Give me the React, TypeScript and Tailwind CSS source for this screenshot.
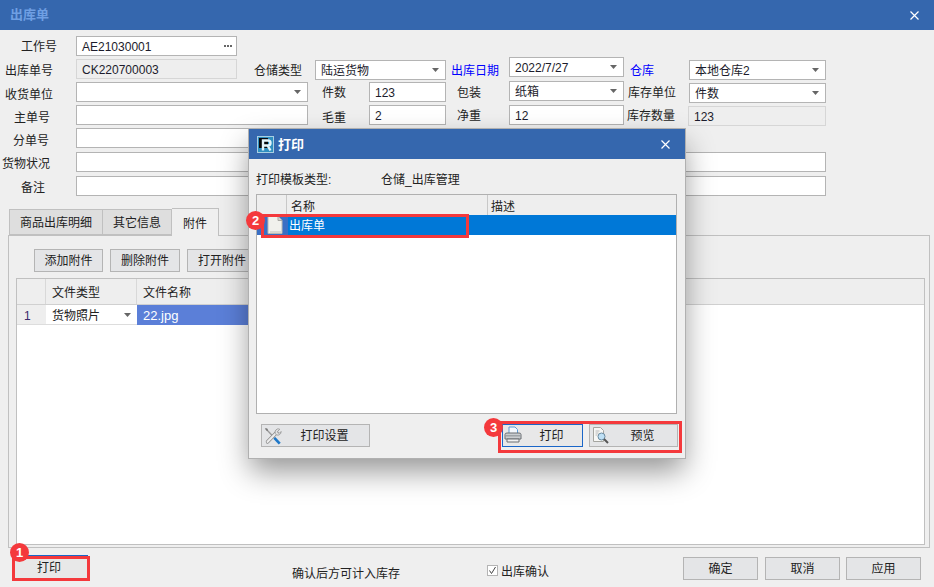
import React from "react";

const FONT = { fontFamily: '"Liberation Sans", "Noto Sans CJK SC", sans-serif' };

function Caret() {
  return (
    <svg width="7" height="4" viewBox="0 0 7 4" className="absolute right-[6px] top-1/2 -translate-y-1/2">
      <path d="M0 0h7L3.5 4z" fill="#666" />
    </svg>
  );
}

function Lbl({ className, children }: { className: string; children: React.ReactNode }) {
  return <div className={`h-5 leading-[22px] shrink-0 whitespace-nowrap ${className}`}>{children}</div>;
}

function Input({ className, children, caret, readOnly }: { className: string; children?: React.ReactNode; caret?: boolean; readOnly?: boolean }) {
  return (
    <div
      className={`relative h-5 shrink-0 border pl-[5px] leading-[20px] text-[#1c1c2c] whitespace-nowrap ${
        readOnly ? "border-[#d6d6d6] bg-[#eeeeee]" : "border-[#b4b4b4] bg-white"
      } ${className}`}
    >
      {children}
      {caret && <Caret />}
    </div>
  );
}

function Btn({ className, children, focused }: { className: string; children?: React.ReactNode; focused?: boolean }) {
  return (
    <div
      className={`flex items-center justify-center border pt-[1px] text-[#222] shrink-0 ${
        focused ? "border-[#1a66c8] bg-[#e8e8e8]" : "border-[#b4b4b4] bg-[#e4e5e7]"
      } ${className}`}
    >
      {children}
    </div>
  );
}

function Badge({ n, className }: { n: number; className: string }) {
  return (
    <div className={`absolute flex h-[19px] w-[19px] items-center justify-center rounded-full bg-[#f4393c] text-[13px] font-bold text-white ${className}`}>
      {n}
    </div>
  );
}

function Logo() {
  return (
    <svg width="17" height="17" viewBox="0 0 17 17" className="shrink-0">
      <rect x="0.5" y="0.5" width="16" height="16" fill="#2f8fc0" stroke="#a8cfe2" />
      <rect x="2" y="2" width="9" height="10" fill="#07090c" />
      <path d="M6 14.500V4.500h5a2.500 2.500 0 0 1 0 5H6M10.500 9.500l3 5" fill="none" stroke="#e4f5fc" strokeWidth="2.400" />
    </svg>
  );
}

function DocIcon() {
  return (
    <svg width="16" height="18" viewBox="0 0 16 18">
      <path d="M1 .5h10l4 4v13H1z" fill="#f1f1ec" stroke="#b9b9b4" />
      <path d="M11 .5v4h4" fill="#d6d6d0" stroke="#a9a9a4" />
      <path d="M3 15h11v2H3z" fill="#d8d8d2" />
    </svg>
  );
}

function WrenchIcon() {
  return (
    <svg width="18" height="18" viewBox="0 0 20 20">
      <path d="M2 2l9.500 10" stroke="#9a9a9a" strokeWidth="1.500" fill="none" />
      <path d="M1 1l3 1 .5 2.500L2.500 4z" fill="#7a7a7a" />
      <path d="M14 6L4 16.500" stroke="#8a8a8a" strokeWidth="4" strokeLinecap="round" fill="none" />
      <path d="M14 6L4 16.500" stroke="#ececec" strokeWidth="2.400" strokeLinecap="round" fill="none" />
      <path d="M17.500 2.500l-2.500 2.500.5 1.500 1.500.5 2-2a3.800 3.800 0 0 1-5.200 3.800 3.800 3.800 0 0 1 1-6.600 4 4 0 0 1 2.700.300z" fill="#e2e2e2" stroke="#8a8a8a" strokeWidth="0.800" />
      <path d="M11.500 12l6 6.500" stroke="#1f78c8" strokeWidth="3" fill="none" />
    </svg>
  );
}

function PrinterIcon() {
  return (
    <svg width="18" height="18" viewBox="0 0 18 18">
      <path d="M5 1h6l2.500 2.500V8H5z" fill="#f4f8fc" stroke="#5d9bd5" />
      <path d="M1 8.500q0-1.500 2-1.500h12q2 0 2 1.500V13H1z" fill="#c9cdd0" stroke="#6b6f73" />
      <path d="M2 9h14v1.500H2z" fill="#9ea3a7" />
      <path d="M3 13h12v3H3z" fill="#f2f2f2" stroke="#6b6f73" />
    </svg>
  );
}

function PreviewIcon() {
  return (
    <svg width="18" height="18" viewBox="0 0 18 18">
      <path d="M1.500.5h7l3 3v11h-10z" fill="#f7f7f5" stroke="#a5a5a0" />
      <path d="M3.500 4h4M3.500 6h3M3.500 8h2" stroke="#b8b8b8" />
      <circle cx="9.500" cy="9.500" r="3.500" fill="#bfe0f5" stroke="#6a8aa0" />
      <path d="M12 12l4 4" stroke="#555" strokeWidth="2" />
    </svg>
  );
}

function Close() {
  return (
    <svg width="9" height="9" viewBox="0 0 9 9">
      <path d="M.5.500l8 8M8.500.500l-8 8" stroke="#fff" strokeWidth="1.200" />
    </svg>
  );
}

export default function App() {
  return (
    <div style={FONT} className="relative flex h-[587px] w-[934px] flex-col overflow-hidden bg-[#efefef] text-[12px] text-[#222]">
      <div className="flex h-[30px] shrink-0 items-center justify-between bg-[#3567ae] pl-[10px] pr-[15px]">
        <span className="text-[13px] font-bold text-[#6f9fe3]">出库单</span>
        <Close />
      </div>

      <div className="shrink-0 pt-[6px]">
        <div className="flex h-[21px]">
          <Lbl className="w-[76px] pl-[21px]">工作号</Lbl>
          <Input className="w-[161px]">
            AE21030001
            <svg width="8" height="2" viewBox="0 0 8 2" className="absolute right-[4px] top-[8px]">
              <path d="M0 0h2v2H0zM3 0h2v2H3zM6 0h2v2H6z" fill="#666" />
            </svg>
          </Input>
        </div>

        <div className="flex h-[24px]">
          <Lbl className="mt-[3px] w-[76px] pl-[5px]">出库单号</Lbl>
          <Input readOnly className="mt-[2px] w-[161px]">CK220700003</Input>
          <Lbl className="mt-[3px] ml-[17px] w-[61px]">仓储类型</Lbl>
          <Input caret className="mt-[3px] w-[131px]">陆运货物</Input>
          <Lbl className="mt-[3px] ml-[5px] w-[58px] text-[#0000ff]">出库日期</Lbl>
          <Input caret className="w-[115px]">2022/7/27</Input>
          <Lbl className="mt-[3px] ml-[6px] w-[59px] text-[#0000ff]">仓库</Lbl>
          <Input caret className="mt-[3px] w-[137px]">本地仓库2</Input>
        </div>

        <div className="flex h-[24px]">
          <Lbl className="mt-[3px] w-[76px] pl-[5px]">收货单位</Lbl>
          <Input caret className="mt-[1px] w-[232px]" />
          <Lbl className="mt-[1px] ml-[14px] w-[47px]">件数</Lbl>
          <Input className="mt-[1px] w-[77px]">123</Input>
          <Lbl className="ml-[11px] w-[52px] mt-[1px]">包装</Lbl>
          <Input caret className="w-[115px]">纸箱</Input>
          <Lbl className="mt-[1px] ml-[4px] w-[61px]">库存单位</Lbl>
          <Input caret className="mt-[2px] w-[137px]">件数</Input>
        </div>

        <div className="flex h-[23px]">
          <Lbl className="mt-[2px] w-[76px] pl-[14px]">主单号</Lbl>
          <Input className="w-[232px]" />
          <Lbl className="mt-[2px] ml-[14px] w-[47px]">毛重</Lbl>
          <Input className="w-[77px]">2</Input>
          <Lbl className="ml-[11px] w-[52px]">净重</Lbl>
          <Input className="w-[115px]">12</Input>
          <Lbl className="ml-[3px] w-[61px]">库存数量</Lbl>
          <Input readOnly className="mt-[1px] w-[138px]">123</Input>
        </div>

        <div className="flex h-[24px]">
          <Lbl className="mt-[2px] w-[76px] pl-[13px]">分单号</Lbl>
          <Input className="w-[232px]" />
        </div>

        <div className="flex h-[24px]">
          <Lbl className="mt-[1px] w-[76px] pl-[2px]">货物状况</Lbl>
          <Input className="w-[750px]" />
        </div>

        <div className="flex h-[20px]">
          <Lbl className="mt-[1px] w-[76px] pl-[21px]">备注</Lbl>
          <Input className="w-[750px]" />
        </div>
      </div>

      <div className="flex shrink-0 pl-[9px] pt-[12px]">
        <div className="mt-[1px] flex h-[26px] w-[94px] items-center justify-center border border-[#c0c0c0] bg-[#dedede] pt-[2px]">商品出库明细</div>
        <div className="mt-[1px] flex h-[26px] w-[69px] items-center justify-center border border-l-0 border-[#c0c0c0] bg-[#dedede] pt-[2px]">其它信息</div>
        <div className="z-10 -mb-px flex h-[28px] w-[47px] items-center justify-center border border-b-0 border-l-0 border-[#c0c0c0] bg-[#efefef] pt-[3px]">附件</div>
      </div>

      <div className="ml-[8px] mr-[4px] flex h-[313px] shrink-0 flex-col border border-[#c0c0c0] pl-[7px] pr-[4px] pt-[13px]">
        <div className="flex gap-[7px] pl-[18px]">
          <Btn className="h-[23px] w-[69px]">添加附件</Btn>
          <Btn className="h-[23px] w-[70px]">删除附件</Btn>
          <Btn className="h-[23px] w-[70px]">打开附件</Btn>
        </div>
        <div className="mt-[6px] flex h-[267px] flex-col border border-[#c0c0c0] bg-white">
          <div className="flex h-[26px] shrink-0 border-b border-[#d0d0d0] bg-[#eeeeee] leading-[28px]">
            <div className="w-[29px] border-r border-[#d8d8d8]" />
            <div className="w-[91px] border-r border-[#d8d8d8] pl-[6px]">文件类型</div>
            <div className="flex-1 pl-[6px]">文件名称</div>
          </div>
          <div className="flex h-[20px] shrink-0 leading-[22px]">
            <div className="w-[29px] border-b border-[#dddddd] bg-[#eeeeee] pl-[7px] text-[#3a2a6a]">1</div>
            <div className="relative w-[91px] border-b border-[#dddddd] pl-[6px]">
              货物照片
              <Caret />
            </div>
            <div className="w-[140px] bg-[#5b7fd8] pl-[6px] text-[13px] text-white">22.jpg</div>
          </div>
        </div>
      </div>

      <div className="flex flex-1">
        <Btn focused className="ml-[13px] mt-[7px] h-[24px] w-[75px] pr-[3px]">打印</Btn>
        <div className="ml-[204px] mt-[16px] leading-5">确认后方可计入库存</div>
        <div className="ml-[87px] mt-[16px] flex items-start gap-[3px]">
          <div className="mt-[1px] flex h-[11px] w-[11px] items-center justify-center border border-[#b4b4b4] bg-white">
            <svg width="9" height="9" viewBox="0 0 9 9"><path d="M1.500 4.500L3.500 7.500 7.500 1" stroke="#444" fill="none" /></svg>
          </div>
          <span className="leading-[16px]">出库确认</span>
        </div>
        <Btn className="ml-[134px] mt-[9px] h-[23px] w-[75px]">确定</Btn>
        <Btn className="ml-[7px] mt-[9px] h-[23px] w-[75px]">取消</Btn>
        <Btn className="ml-[6px] mt-[9px] h-[23px] w-[75px]">应用</Btn>
      </div>

      {/* red highlight + badge over the main print button */}
      <div className="absolute left-[12px] top-[556px] h-[25px] w-[78px] border-[3px] border-[#f4393c]" />
      <Badge n={1} className="left-[10px] top-[543px]" />

      {/* print dialog */}
      <div className="absolute left-[248px] top-[128px] flex h-[331px] w-[438px] flex-col border border-[#b0b0b0] bg-[#efefef] shadow-[0_14px_28px_-2px_rgba(0,0,0,0.42)]">
        <div className="flex h-[30px] shrink-0 items-center bg-[#3567ae] pl-[8px] pr-[15px] pt-[1px]">
          <Logo />
          <span className="ml-[4px] flex-1 text-[13px] font-bold text-white">打印</span>
          <Close />
        </div>
        <div className="flex h-[35px] shrink-0 items-center pl-[7px] pt-[7px]">
          <span className="w-[125px]">打印模板类型:</span>
          <span>仓储_出库管理</span>
        </div>
        <div className="ml-[7px] flex h-[220px] w-[421px] shrink-0 flex-col border border-[#b0b0b0] bg-white">
          <div className="flex h-[20px] shrink-0 bg-[#eeeeee] leading-[24px]">
            <div className="w-[30px] border-r border-[#c8c8c8]" />
            <div className="w-[201px] border-r border-[#c8c8c8] pl-[4px]">名称</div>
            <div className="flex-1 pl-[3px]">描述</div>
          </div>
          <div className="flex h-[20px] shrink-0 items-center bg-[#0078d7] text-white">
            <div className="flex h-[20px] w-[31px] items-center justify-center bg-[#3a6fc4] pl-[4px]">
              <DocIcon />
            </div>
            <span className="pl-[1px] pt-[1px]">出库单</span>
          </div>
        </div>
        <div className="flex shrink-0 pl-[12px] pt-[10px]">
          <Btn className="relative h-[23px] w-[109px] pl-[18px]">
            <span className="absolute left-[2px] top-[2px]"><WrenchIcon /></span>
            打印设置
          </Btn>
          <Btn focused className="relative ml-[132px] h-[23px] w-[81px] pl-[18px]">
            <span className="absolute left-[1px] top-[1px]"><PrinterIcon /></span>
            打印
          </Btn>
          <Btn className="relative ml-[6px] h-[23px] w-[89px] pl-[18px]">
            <span className="absolute left-[2px] top-[2px]"><PreviewIcon /></span>
            预览
          </Btn>
        </div>
      </div>

      {/* annotations over the dialog */}
      <div className="absolute left-[261px] top-[214px] h-[24px] w-[208px] border-[3px] border-[#f4393c]" />
      <Badge n={2} className="left-[246px] top-[211px]" />
      <div className="absolute left-[498px] top-[421px] h-[32px] w-[184px] border-[3px] border-[#f4393c]" />
      <Badge n={3} className="left-[484px] top-[418px]" />
    </div>
  );
}
